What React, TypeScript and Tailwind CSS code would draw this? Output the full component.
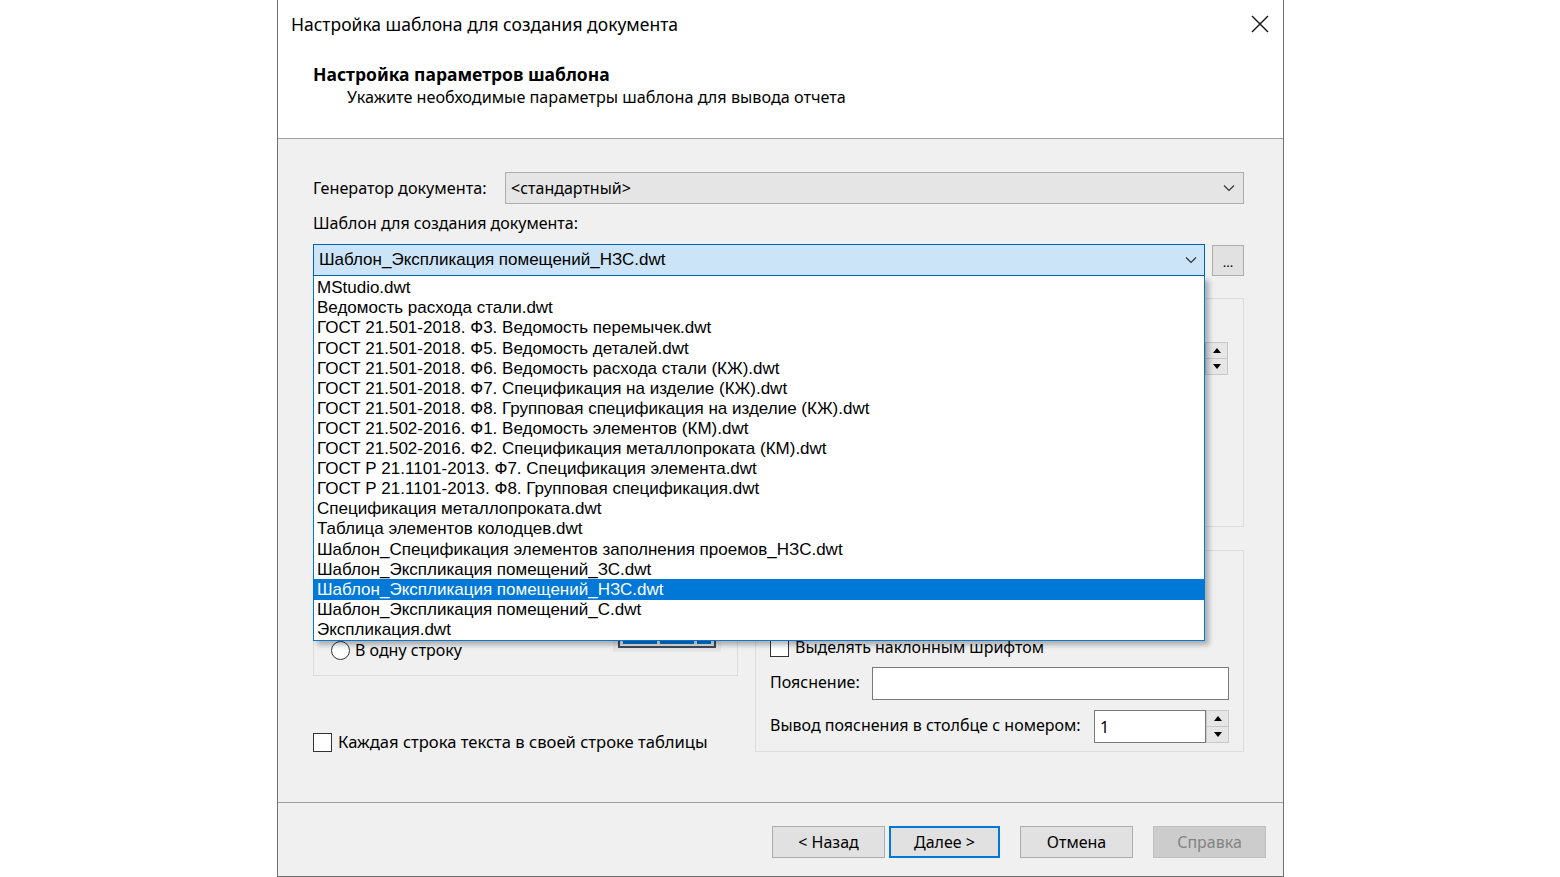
import React from "react";

const TEMPLATES = [
  "MStudio.dwt",
  "Ведомость расхода стали.dwt",
  "ГОСТ 21.501-2018. Ф3. Ведомость перемычек.dwt",
  "ГОСТ 21.501-2018. Ф5. Ведомость деталей.dwt",
  "ГОСТ 21.501-2018. Ф6. Ведомость расхода стали (КЖ).dwt",
  "ГОСТ 21.501-2018. Ф7. Спецификация на изделие (КЖ).dwt",
  "ГОСТ 21.501-2018. Ф8. Групповая спецификация на изделие (КЖ).dwt",
  "ГОСТ 21.502-2016. Ф1. Ведомость элементов (КМ).dwt",
  "ГОСТ 21.502-2016. Ф2. Спецификация металлопроката (КМ).dwt",
  "ГОСТ Р 21.1101-2013. Ф7. Спецификация элемента.dwt",
  "ГОСТ Р 21.1101-2013. Ф8. Групповая спецификация.dwt",
  "Спецификация металлопроката.dwt",
  "Таблица элементов колодцев.dwt",
  "Шаблон_Спецификация элементов заполнения проемов_НЗС.dwt",
  "Шаблон_Экспликация помещений_ЗС.dwt",
  "Шаблон_Экспликация помещений_НЗС.dwt",
  "Шаблон_Экспликация помещений_С.dwt",
  "Экспликация.dwt",
];

const SELECTED = "Шаблон_Экспликация помещений_НЗС.dwt";

const ui = "font-['Noto_Sans',sans-serif]";
const list = "font-['Liberation_Sans',Arial,sans-serif]";

function Chevron() {
  return (
    <svg width="12" height="8" viewBox="0 0 12 8" fill="none" aria-hidden="true">
      <path d="M1 1.5L6 6.5L11 1.5" stroke="#333" strokeWidth="1.2" />
    </svg>
  );
}

function Spinner() {
  return (
    <div className="flex flex-col w-[23px] h-[33px] border border-[#c8c8c8] bg-[#f0f0f0]">
      <div className="flex-1 flex items-center justify-center border-b border-[#c8c8c8] bg-[#e6e6e6]">
        <svg width="8" height="5" viewBox="0 0 8 5" aria-hidden="true">
          <path d="M0 5L4 0L8 5Z" fill="#000" />
        </svg>
      </div>
      <div className="flex-1 flex items-center justify-center bg-[#e6e6e6]">
        <svg width="8" height="5" viewBox="0 0 8 5" aria-hidden="true">
          <path d="M0 0L4 5L8 0Z" fill="#000" />
        </svg>
      </div>
    </div>
  );
}

function Checkbox({ label, className = "" }: { label: string; className?: string }) {
  return (
    <label className="flex items-center gap-[6px] h-[20px]">
      <span className="w-[19px] h-[19px] border border-[#333] bg-white" />
      <span className={`text-black ${className}`}>{label}</span>
    </label>
  );
}

function Button({
  children,
  primary,
  disabled,
  className = "",
}: {
  children: React.ReactNode;
  primary?: boolean;
  disabled?: boolean;
  className?: string;
}) {
  const look = disabled
    ? "bg-[#cccccc] border border-[#bfbfbf] text-[#838383]"
    : primary
      ? "bg-[#e1e1e1] border-2 border-[#0078d7] text-black"
      : "bg-[#e1e1e1] border border-[#adadad] text-black";
  return (
    <button className={`h-[32px] flex items-center justify-center text-[16px] ${look} ${className}`}>
      {children}
    </button>
  );
}

export default function App() {
  return (
    <div className={`w-[1560px] h-[877px] bg-white overflow-hidden ${ui}`}>
      <div className="ml-[277px] w-[1007px] h-[877px] flex flex-col border-x border-b border-[#707070] bg-[#f0f0f0]">
        {/* title bar */}
        <div className="h-[48px] bg-white flex items-center justify-between pl-[13px] pr-[14px]">
          <span className="text-[17.5px] text-black">Настройка шаблона для создания документа</span>
          <svg width="18" height="18" viewBox="0 0 18 18" aria-hidden="true">
            <path d="M1 1L17 17M17 1L1 17" stroke="#111" strokeWidth="1.4" />
          </svg>
        </div>

        {/* wizard page header */}
        <div className="h-[91px] bg-white border-b border-[#a0a0a0] pt-[16px] pl-[35px]">
          <div className="h-[20px] flex items-center text-[17.5px] font-bold text-black">
            Настройка параметров шаблона
          </div>
          <div className="h-[20px] mt-[3px] flex items-center pl-[34px] text-[16.2px] text-black">
            Укажите необходимые параметры шаблона для вывода отчета
          </div>
        </div>

        {/* page body */}
        <div className="flex-1 pl-[35px] pr-[39px] pt-[33px] text-[16px] text-black">
          <div className="flex items-center h-[32px]">
            <span className="w-[192px] text-[16.2px]">Генератор документа:</span>
            <div className="flex-1 h-[32px] flex items-center justify-between bg-[#e5e5e5] border border-[#adadad] pl-[5px] pr-[8px]">
              <span>&lt;стандартный&gt;</span>
              <Chevron />
            </div>
          </div>

          <div className="h-[20px] mt-[9px] flex items-center">Шаблон для создания документа:</div>

          <div className="mt-[11px] flex items-center gap-[7px] h-[32px]">
            <div className="relative flex-1 h-[32px]">
              <div className="h-full flex items-center justify-between bg-[#cce4f7] border border-[#0063b1] pl-[5px] pr-[7px]">
                <span className={`${list} text-[17px]`}>{SELECTED}</span>
                <Chevron />
              </div>

              {/* open dropdown */}
              <div className="absolute left-0 right-0 top-full z-10 h-[365px] bg-white border border-t-0 border-[#0078d7] pt-[2px] shadow-[4px_4px_5px_rgba(0,0,0,0.28)]">
                {TEMPLATES.map((t) => (
                  <div
                    key={t}
                    className={`${list} h-[20.1px] flex items-center pl-[3px] text-[17px] ${
                      t === SELECTED ? "bg-[#0078d7] text-white" : "text-black"
                    }`}
                  >
                    {t}
                  </div>
                ))}
              </div>
            </div>
            <button className="w-[32px] h-[31px] bg-[#e1e1e1] border border-[#adadad] text-[13px] flex items-end justify-center pb-[6px] leading-none">
              ...
            </button>
          </div>

          {/* option groups */}
          <div className="mt-[22px] grid grid-cols-[425px_489px] gap-x-[17px]">
            <div className="flex flex-col">
              <div className="h-[378px] border border-[#dcdcdc] flex flex-col justify-end pb-[15px] pl-[17px] pr-[16px]">
                <div className="flex items-end justify-between">
                  <label className="flex items-center gap-[5px] h-[20px]">
                    <span className="w-[19px] h-[19px] rounded-full border border-[#333] bg-white" />
                    <span>В одну строку</span>
                  </label>
                  <div className="bg-[#e6e6e6] px-[5px] pb-[4px] pt-[4px] mb-[8px]">
                    <div className="w-[98px] h-[26px] border-2 border-[#3c4a5c] flex items-end gap-[3px] px-[3px] pb-[2px]">
                      <span className="flex-1 h-[3px] bg-[#0078d7]" />
                      <span className="flex-1 h-[3px] bg-[#0078d7]" />
                      <span className="w-[14px] h-[3px] bg-[#0078d7]" />
                    </div>
                  </div>
                </div>
              </div>
              <div className="mt-[56px]">
                <Checkbox label="Каждая строка текста в своей строке таблицы" className="text-[16.6px]" />
              </div>
            </div>

            <div className="flex flex-col">
              <div className="h-[229px] border border-[#dcdcdc] pt-[43px] pr-[15px] flex justify-end">
                <div className="flex">
                  <div className="w-[80px] h-[33px] border border-[#7a7a7a] bg-white" />
                  <Spinner />
                </div>
              </div>
              <div className="mt-[23px] h-[202px] border border-[#dcdcdc] flex flex-col justify-end pl-[14px] pr-[14px] pb-[8px]">
                <Checkbox label="Выделять наклонным шрифтом" />
                <div className="mt-[10px] flex items-center h-[33px]">
                  <span className="w-[102px] -mt-[3px]">Пояснение:</span>
                  <div className="flex-1 h-[33px] border border-[#7a7a7a] bg-white" />
                </div>
                <div className="mt-[10px] flex items-center h-[33px]">
                  <span className="flex-1 -mt-[3px]">Вывод пояснения в столбце с номером:</span>
                  <div className="w-[112px] h-[33px] border border-[#7a7a7a] bg-white flex items-center pl-[5px]">1</div>
                  <Spinner />
                </div>
              </div>
            </div>
          </div>
        </div>

        {/* wizard buttons */}
        <div className="h-[74px] border-t border-[#a0a0a0] flex items-start justify-end pt-[23px] pr-[17px]">
          <Button className="w-[113px]">&lt; Назад</Button>
          <Button primary className="w-[111px] ml-[4px]">Далее &gt;</Button>
          <Button className="w-[113px] ml-[20px]">Отмена</Button>
          <Button disabled className="w-[113px] ml-[20px]">Справка</Button>
        </div>
      </div>
    </div>
  );
}
